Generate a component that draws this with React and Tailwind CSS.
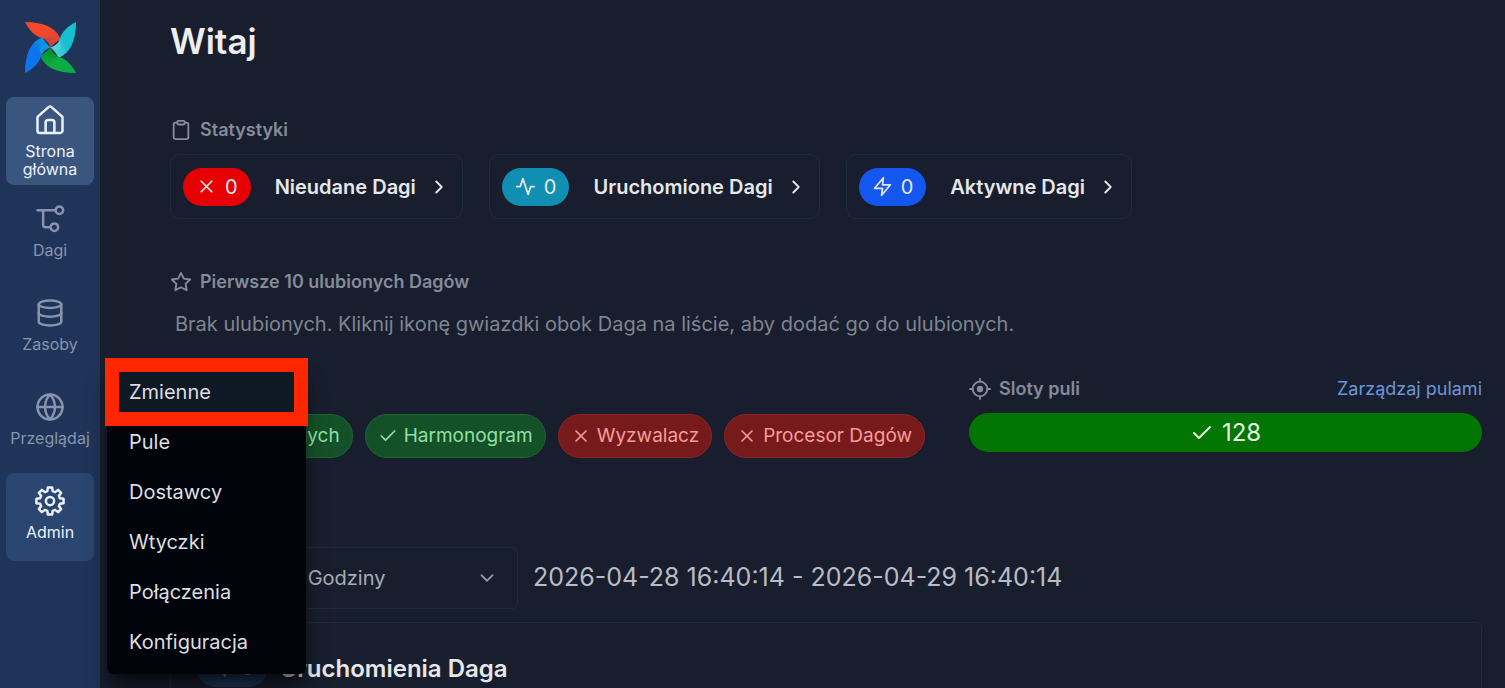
import { useState } from "react";
import { FiActivity, FiCheck, FiChevronDown, FiChevronRight, FiClipboard, FiDatabase, FiGlobe, FiStar, FiX, FiZap } from "react-icons/fi";

const blade = "M0 0 C19 0 31 6 35 17 C32 19 28 21 25 25 C24 21 21 17 16 15.500 C10 14 4 8 0 0Z";
const hub = "M25 25 C24 21 22 18 18 16 C22 14 25 15 27 16 C29 18 27 22 25 25Z";

const blades = [
  { angle: 0, main: "#f4482c", dark: "#c9463a" },
  { angle: 90, main: "#16bfd2", dark: "#62d8da" },
  { angle: 180, main: "#0bad44", dark: "#078c2c" },
  { angle: 270, main: "#0c74ee", dark: "#12a4dc" },
];

function Logo() {
  return (
    <svg viewBox="0 0 50 50" className="size-[51px]" aria-hidden="true">
      {blades.map((b) => (
        <g key={b.angle} transform={`rotate(${b.angle} 25 25)`}>
          <linearGradient id={`blade${b.angle}`} x1="0" y1="0" x2="1" y2="1">
            <stop offset="0.5" stopColor={b.main} />
            <stop offset="1" stopColor={b.dark} />
          </linearGradient>
          <path d={blade} fill={`url(#blade${b.angle})`} />
          <path d={hub} fill={b.dark} opacity="0.6" />
        </g>
      ))}
    </svg>
  );
}

function Svg({ children, className }) {
  return (
    <svg viewBox="0 0 24 24" fill="none" stroke="currentColor" strokeWidth="2" strokeLinecap="round" strokeLinejoin="round" className={className} aria-hidden="true">
      {children}
    </svg>
  );
}

function HomeIcon({ className }) {
  return (
    <Svg className={className}>
      <path d="M2 9.500 10.800 1.700a1.800 1.800 0 0 1 2.400 0L22 9.500V20.500a1.800 1.800 0 0 1-1.800 1.800H3.800A1.800 1.800 0 0 1 2 20.500Z" />
      <path d="M8.500 22v-8a2 2 0 0 1 2-2h3a2 2 0 0 1 2 2v8" />
    </Svg>
  );
}

function DagIcon({ className }) {
  return (
    <Svg className={className}>
      <path d="M2 5h14M6.500 5v11.500a2 2 0 0 0 2 2H12" />
      <circle cx="19.500" cy="5" r="3" />
      <circle cx="15.500" cy="18.500" r="3" />
    </Svg>
  );
}

// eight rounded teeth around the ring
const gear = Array.from({ length: 8 }, (_, i) =>
  [[-15, 8.2], [-9, 11], [9, 11], [15, 8.2]].map(([off, r]) => {
    const a = ((i * 45 + off) * Math.PI) / 180;
    return `${(12 + r * Math.sin(a)).toFixed(2)} ${(12 - r * Math.cos(a)).toFixed(2)}`;
  }).join(" L")
).join(" L");

function GearIcon({ className }) {
  return (
    <Svg className={className}>
      <path d={`M${gear}Z`} />
      <circle cx="12" cy="12" r="3.300" />
    </Svg>
  );
}

function TargetIcon({ className }) {
  return (
    <Svg className={className}>
      <circle cx="12" cy="12" r="8" />
      <circle cx="12" cy="12" r="3.500" fill="currentColor" stroke="none" />
      <path d="M12 1v3M12 20v3M1 12h3M20 12h3" />
    </Svg>
  );
}

function NavItem({ icon: Icon, label, className, ...rest }) {
  return (
    <button className={`flex w-full h-22 flex-col items-center justify-center gap-[7px] rounded-lg text-base leading-[18px] ${className}`} {...rest}>
      <Icon className="size-[30px] shrink-0" />
      <span>{label}</span>
    </button>
  );
}

function Heading({ icon: Icon, children }) {
  return (
    <h2 className="flex items-center gap-2 h-6 text-lg font-semibold text-[#858b99]">
      <Icon className="size-[22px]" />
      {children}
    </h2>
  );
}

function Stat({ icon: Icon, label, color }) {
  return (
    <button className="flex items-center h-[65px] px-3 rounded-[10px] border border-[#1f2c3c] text-xl font-semibold text-[#e6e7ea]">
      <span className={`flex items-center gap-2 h-[38px] px-[13px] rounded-full font-normal ${color}`}>
        <Icon className="size-[21px]" />0
      </span>
      <span className="ml-6 mr-3">{label}</span>
      <FiChevronRight className="size-[22px]" />
    </button>
  );
}

function Health({ ok, children }) {
  const Icon = ok ? FiCheck : FiX;
  return (
    <span className={`flex items-center gap-1.5 h-11 px-3 rounded-full border text-[19px] whitespace-nowrap ${ok ? "bg-[#145028] border-[#1b6633] text-[#8fe0a5]" : "bg-[#771a1c] border-[#8f2426] text-[#f79c9c]"}`}>
      <Icon className="size-5" />
      {children}
    </span>
  );
}

const adminLinks = ["Zmienne", "Pule", "Dostawcy", "Wtyczki", "Połączenia", "Konfiguracja"];

function AdminMenu() {
  return (
    <div className="absolute z-10 left-[101px] -bottom-[113px] w-[199px] flex flex-col gap-2.5 px-3 pt-2.5 pb-3 rounded-md bg-[#00030a] shadow-xl shadow-black/50">
      {adminLinks.map((name, i) => (
        <a key={name} href="#" className={`relative flex items-center h-10 px-2.5 text-xl text-[#dedfe1] ${i === 0 ? "bg-[#0e1925]" : ""}`}>
          {name}
          {i === 0 && <span className="absolute -inset-3.5 border-14 border-[#ff2600]" />}
        </a>
      ))}
    </div>
  );
}

function App() {
  const [menuOpen, setMenuOpen] = useState(true);
  const [range, setRange] = useState("24");

  return (
    <div className="h-screen flex overflow-hidden bg-[#181e2d] font-['Inter',sans-serif]">
      <nav className="w-[100px] shrink-0 flex flex-col items-center gap-1.5 px-1.5 bg-[#203459]">
        <a href="#" aria-label="Airflow" className="pt-[22px] pb-[18px]"><Logo /></a>
        <NavItem icon={HomeIcon} label="Strona główna" className="bg-[#3a567f] text-[#eaf1fc]" />
        <NavItem icon={DagIcon} label="Dagi" className="pb-2 text-[#8794ae]" />
        <NavItem icon={FiDatabase} label="Zasoby" className="pb-2 text-[#8794ae]" />
        <NavItem icon={FiGlobe} label="Przeglądaj" className="pb-2 text-[#8794ae]" />
        <div className="relative w-full">
          <NavItem icon={GearIcon} label="Admin" className="pb-2 bg-[#2a456f] text-[#eaf1fc]" onClick={() => setMenuOpen(!menuOpen)} />
          {menuOpen && <AdminMenu />}
        </div>
      </nav>

      <main className="flex-1 min-w-0 pl-[70px] pr-[23px] pt-[21px]">
        <h1 className="text-[35px] leading-10 font-semibold text-[#eeeef0]">Witaj</h1>

        <section className="mt-[57px]">
          <Heading icon={FiClipboard}>Statystyki</Heading>
          <div className="mt-3 flex gap-[26px]">
            <Stat icon={FiX} label="Nieudane Dagi" color="bg-[#e60003]" />
            <Stat icon={FiActivity} label="Uruchomione Dagi" color="bg-[#118fb3]" />
            <Stat icon={FiZap} label="Aktywne Dagi" color="bg-[#1457ee]" />
          </div>
        </section>

        <section className="mt-[51px]">
          <Heading icon={FiStar}>Pierwsze 10 ulubionych Dagów</Heading>
          <p className="mt-[18px] pl-[5px] text-xl leading-6 text-[#7f8592]">
            Brak ulubionych. Kliknij ikonę gwiazdki obok Daga na liście, aby dodać go do ulubionych.
          </p>
        </section>

        <div className="mt-[41px] grid grid-cols-[minmax(0,755fr)_minmax(0,513fr)] gap-11">
          <section className="flex items-end justify-end gap-3">
            <Health ok>Baza danych</Health>
            <Health ok>Harmonogram</Health>
            <Health>Wyzwalacz</Health>
            <Health>Procesor Dagów</Health>
          </section>
          <section className="pb-1.5">
            <div className="flex items-center justify-between">
              <Heading icon={TargetIcon}>Sloty puli</Heading>
              <a href="#" className="text-lg leading-6 text-[#6d95d8]">Zarządzaj pulami</a>
            </div>
            <div className="mt-3 flex items-center justify-center gap-2 h-[39px] rounded-full bg-[#027502] text-2xl text-[#e4f3e4]">
              <FiCheck className="size-6" />128
            </div>
          </section>
        </div>

        <div className="mt-[89px] flex items-center gap-[15px]">
          <div className="grid items-center w-[348px]">
            <select
              aria-label="Zakres czasu"
              value={range}
              onChange={(e) => setRange(e.target.value)}
              className="col-start-1 row-start-1 h-[62px] px-[22px] appearance-none rounded-md border border-[#1f2c3c] text-xl text-[#a9adb6]"
            >
              <option value="24">Ostatnie 24 Godziny</option>
            </select>
            <FiChevronDown className="col-start-1 row-start-1 justify-self-end mr-5 size-[22px] text-[#8f95a1] pointer-events-none" />
          </div>
          <span className="text-[25px] text-[#b9bcc4]">2026-04-28 16:40:14 - 2026-04-29 16:40:14</span>
        </div>

        <section className="mt-[13px] flex items-start gap-3 h-40 px-[26px] pt-[26px] rounded-md border border-[#1f2c3c]">
          <span className="flex items-center gap-2 h-[38px] px-3.5 rounded-full bg-[#1d3557] text-xl text-[#7189ad]">
            <FiActivity className="size-[22px]" />0
          </span>
          <h2 className="text-2xl leading-10 font-semibold text-[#e6e7ea]">Uruchomienia Daga</h2>
        </section>
      </main>
    </div>
  );
}

export default App;
